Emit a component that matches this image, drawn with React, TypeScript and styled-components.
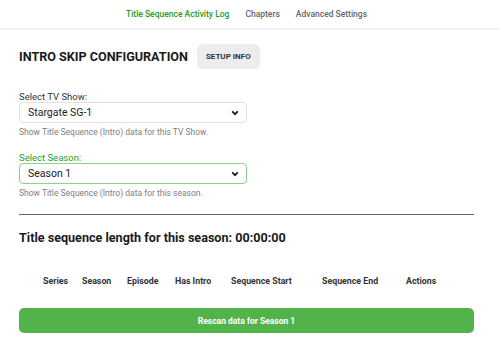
import styled, { createGlobalStyle } from "styled-components";

const GlobalStyle = createGlobalStyle`
  body {
    margin: 0;
    background: #fff;
    font-family: Roboto, "Liberation Sans", sans-serif;
    color: #222;
  }
`;

const columns = [
  { label: "Series", width: 39 },
  { label: "Season", width: 45 },
  { label: "Episode", width: 48 },
  { label: "Has Intro", width: 56 },
  { label: "Sequence Start", width: 91 },
  { label: "Sequence End", width: 84 },
  { label: "Actions", width: 60 },
];

const Chevron = () => (
  <svg width="8" height="6" viewBox="0 0 8 6">
    <path d="M1.2 1.3 L4 4.2 L6.8 1.3" fill="none" stroke="#1a1a1a" strokeWidth="1.7" />
  </svg>
);

const App = () => {
  return (
    <>
      <GlobalStyle />
      <Nav>
        <NavItem active>Title Sequence Activity Log</NavItem>
        <NavItem>Chapters</NavItem>
        <NavItem>Advanced Settings</NavItem>
      </Nav>
      <Page>
        <HeaderRow>
          <Title>INTRO SKIP CONFIGURATION</Title>
          <InfoButton>SETUP INFO</InfoButton>
        </HeaderRow>

        <Field>
          <Label>Select TV Show:</Label>
          <Select>
            <span>Stargate SG-1</span>
            <Chevron />
          </Select>
          <Helper>Show Title Sequence (Intro) data for this TV Show.</Helper>
        </Field>

        <Field focused>
          <Label focused>Select Season:</Label>
          <Select focused>
            <span>Season 1</span>
            <Chevron />
          </Select>
          <Helper>Show Title Sequence (Intro) data for this season.</Helper>
        </Field>

        <Divider />

        <LengthTitle>Title sequence length for this season: 00:00:00</LengthTitle>

        <TableHead>
          {columns.map((c) => (
            <HeadCell key={c.label} style={{ width: c.width }}>
              {c.label}
            </HeadCell>
          ))}
        </TableHead>

        <RescanButton>Rescan data for Season 1</RescanButton>
      </Page>
    </>
  );
};

export default App;

const Nav = styled.div`
  height: 28px;
  display: flex;
  justify-content: center;
  align-items: center;
  gap: 16px;
  padding-right: 7px;
  border-bottom: 2px solid #f3f3f3;
`;

const NavItem = styled.div<{ active?: boolean }>`
  font-size: 8.5px;
  font-weight: 500;
  color: ${({ active }) => (active ? "#1f9a1f" : "#666")};
`;

const Page = styled.div`
  padding: 14px 25px 0 19px;
`;

const HeaderRow = styled.div`
  display: flex;
  align-items: center;
  gap: 9px;
`;

const Title = styled.h1`
  margin: 0;
  font-size: 12.6px;
  font-weight: 700;
  color: #1a1a1a;
`;

const InfoButton = styled.div`
  background: #ececee;
  border-radius: 6px;
  height: 25px;
  padding: 0 9px;
  display: flex;
  align-items: center;
  font-size: 8px;
  font-weight: 700;
  color: #333;
`;

const Field = styled.div<{ focused?: boolean }>`
  margin-top: ${({ focused }) => (focused ? "15px" : "22px")};
  width: 228px;
`;

const Label = styled.div<{ focused?: boolean }>`
  font-size: 9.5px;
  color: ${({ focused }) => (focused ? "#2e9e2e" : "#333")};
`;

const Select = styled.div<{ focused?: boolean }>`
  height: 21px;
  box-sizing: border-box;
  border: 1px solid ${({ focused }) => (focused ? "#8fd08f" : "#e2e2e2")};
  border-radius: 4px;
  display: flex;
  align-items: center;
  justify-content: space-between;
  padding: 0 7px 0 8px;
  font-size: 10.5px;
  color: #1a1a1a;
`;

const Helper = styled.div`
  font-size: 8.5px;
  color: #808080;
  margin-top: 4px;
`;

const Divider = styled.div`
  margin-top: 16px;
  height: 1px;
  background: #666;
  width: 455px;
`;

const LengthTitle = styled.h2`
  margin: 15px 0 0;
  font-size: 12.6px;
  font-weight: 700;
  color: #1a1a1a;
`;

const TableHead = styled.div`
  margin-top: 31px;
  display: flex;
  padding-left: 24px;
`;

const HeadCell = styled.div`
  font-size: 8.8px;
  font-weight: 700;
  color: #333;
`;

const RescanButton = styled.div`
  margin-top: 22px;
  width: 455px;
  height: 25px;
  background: #52b34b;
  border-radius: 5px;
  display: flex;
  align-items: center;
  justify-content: center;
  font-size: 8.5px;
  font-weight: 700;
  color: #fff;
`;
